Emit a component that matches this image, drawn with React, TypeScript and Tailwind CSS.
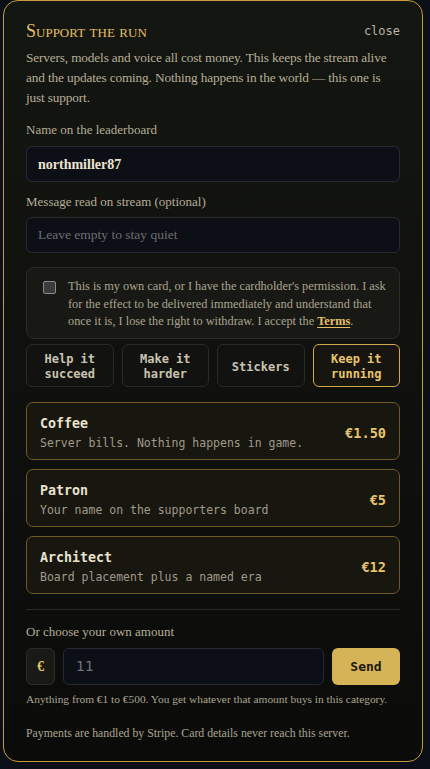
import React from "react";

const SERIF = "font-['Liberation_Serif','DejaVu_Serif',serif]";
const MONO = "font-['DejaVu_Sans_Mono','Liberation_Mono',monospace]";

const tabs = [
  { label: ["Help it", "succeed"], active: false },
  { label: ["Make it", "harder"], active: false },
  { label: ["Stickers"], active: false },
  { label: ["Keep it", "running"], active: true },
];

const tiers = [
  { name: "Coffee", desc: "Server bills. Nothing happens in game.", price: "€1.50" },
  { name: "Patron", desc: "Your name on the supporters board", price: "€5" },
  { name: "Architect", desc: "Board placement plus a named era", price: "€12" },
];

export default function App() {
  return (
    <div className="min-h-[769px] w-[430px] overflow-hidden bg-[#0a0f18] pl-[3px]">
      <div className="w-[420px] rounded-[15px] border border-[#c99a3a] bg-gradient-to-b from-[#141611] to-[#0b0c0a] px-[22px] pt-[20px] pb-[20px]">
        <div className="flex h-[20px] items-center justify-between">
          <div
            className={`${SERIF} text-[18px] leading-[20px] text-[#e3bf67] [font-variant-caps:small-caps]`}
          >
            Support the run
          </div>
          <div className={`${MONO} text-[12px] text-[#b7b3a8]`}>close</div>
        </div>
        <p className={`${SERIF} mt-[7px] text-[13.3px] leading-[20px] tracking-[-0.15px] text-[#b6ae98]`}>
          Servers, models and voice all cost money. This keeps the stream alive and the updates
          coming. Nothing happens in the world — this one is just support.
        </p>

        <div className={`${SERIF} mt-[13px] text-[13px] leading-[18px] text-[#b5ad98]`}>
          Name on the leaderboard
        </div>
        <div
          className={`${SERIF} mt-[7px] flex h-[36px] items-center rounded-[6px] border border-[#272a33] bg-[#0d0f17] px-[11px] text-[14px] font-bold text-[#ece4d0]`}
        >
          northmiller87
        </div>

        <div className={`${SERIF} mt-[11px] text-[13px] leading-[18px] text-[#b5ad98]`}>
          Message read on stream (optional)
        </div>
        <div
          className={`${SERIF} mt-[6px] flex h-[36px] items-center rounded-[6px] border border-[#272a33] bg-[#0d0f17] px-[11px] text-[13.5px] text-[#6c6d70]`}
        >
          Leave empty to stay quiet
        </div>

        <div className="mt-[14px] flex h-[72px] gap-[12px] rounded-[8px] border border-[#2c2d28] bg-[#181915] pl-[16px] pr-[12px] pt-[10px]">
          <div className="mt-[3px] h-[13px] w-[13px] shrink-0 rounded-[2px] border border-[#8a8a8a] bg-[#3a3b3c]" />
          <p className={`${SERIF} text-[12.3px] leading-[17.5px] text-[#aaa491]`}>
            This is my own card, or I have the cardholder's permission. I ask for the effect to be
            delivered immediately and understand that once it is, I lose the right to withdraw. I
            accept the{" "}
            <span className="font-bold text-[#e3bf67] underline underline-offset-2">Terms</span>.
          </p>
        </div>

        <div className="mt-[5px] grid h-[43px] grid-cols-4 gap-[8px]">
          {tabs.map((t, i) => (
            <div
              key={i}
              className={
                t.active
                  ? `${MONO} flex flex-col items-center justify-center rounded-[6px] border border-[#d4a84a] bg-[#16150f] pt-[3px] text-[12px] font-bold leading-[15px] text-[#e8c46c]`
                  : `${MONO} flex flex-col items-center justify-center rounded-[6px] border border-[#2a2b27] bg-[#121310] pt-[3px] text-[12px] font-bold leading-[15px] text-[#c9c3b1]`
              }
            >
              {t.label.map((l, j) => (
                <span key={j}>{l}</span>
              ))}
            </div>
          ))}
        </div>

        <div className="mt-[15px] flex flex-col gap-[9px]">
          {tiers.map((t) => (
            <div
              key={t.name}
              className={`${MONO} flex h-[58px] items-center justify-between rounded-[7px] border border-[#6e5a27] bg-[#17160f] px-[13px] pt-[4px]`}
            >
              <div className="flex flex-col">
                <span className="text-[13.3px] font-bold leading-[18px] text-[#e9e2cf]">{t.name}</span>
                <span className="mt-[2px] text-[11.5px] leading-[16px] text-[#a19b8b]">{t.desc}</span>
              </div>
              <span className="text-[13.6px] font-bold text-[#e8c46c]">{t.price}</span>
            </div>
          ))}
        </div>

        <div className="mt-[15px] h-px bg-[#2a2a25]" />

        <div className={`${SERIF} mt-[13px] text-[13px] leading-[18px] text-[#b5ad98]`}>
          Or choose your own amount
        </div>
        <div className="mt-[7px] flex h-[37px] gap-[8px]">
          <div
            className={`${SERIF} flex w-[29px] items-center justify-center rounded-[6px] border border-[#2c2d28] bg-[#191a16] text-[14px] font-bold text-[#e8c46c]`}
          >
            €
          </div>
          <div className="flex flex-1 items-center rounded-[6px] border border-[#272a33] bg-[#0d0f17] px-[12px] font-['DejaVu_Sans',sans-serif] text-[14px] text-[#6f727a]">
            11
          </div>
          <div
            className={`${MONO} flex w-[68px] items-center justify-center rounded-[6px] bg-[#d5b458] text-[13px] font-bold text-[#1d1708]`}
          >
            Send
          </div>
        </div>
        <p className={`${SERIF} mt-[6px] text-[11.4px] leading-[16px] text-[#aaa491]`}>
          Anything from €1 to €500. You get whatever that amount buys in this category.
        </p>
        <p className={`${SERIF} mt-[18px] text-[11.8px] leading-[16px] text-[#aaa491]`}>
          Payments are handled by Stripe. Card details never reach this server.
        </p>
      </div>
    </div>
  );
}
